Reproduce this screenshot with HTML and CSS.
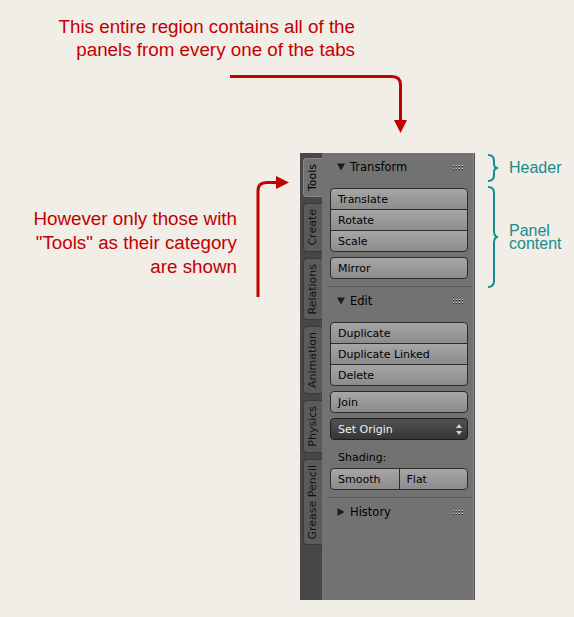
FILE: index.html
```html
<!DOCTYPE html>
<html>
<head>
<meta charset="utf-8">
<link rel="stylesheet" href="styles.css">
</head>
<body>
<div class="page">
  <div class="note note-top">This entire region contains all of the<br>panels from every one of the tabs</div>
  <div class="note note-left">However only those with<br>"Tools" as their category<br>are shown</div>
  <svg class="overlay" width="574" height="617" viewBox="0 0 574 617">
    <g fill="none" stroke="#c30000" stroke-width="3">
      <path d="M230,76.5 H392 Q400.5,76.5 400.5,85 V121"/>
      <path d="M258,297 V191 Q258,182.5 266.5,182.5 H277"/>
    </g>
    <g fill="#c30000">
      <polygon points="394,120 407,120 400.5,133"/>
      <polygon points="276,176 276,189 289,182.5"/>
    </g>
    <g fill="none" stroke="#178c8c" stroke-width="2">
      <path d="M488,155 Q494,155 494,161 V164 Q494,168 498,168 Q494,168 494,172 V175 Q494,181 488,181"/>
      <path d="M488,187 Q494,187 494,193 V231 Q494,237 498,237 Q494,237 494,243 V281 Q494,287 488,287"/>
    </g>
  </svg>
  <div class="label label-header">Header</div>
  <div class="label label-content">Panel<br>content</div>

  <div class="shelf">
    <div class="tabs">
      <div class="tab active"><span>Tools</span></div>
      <div class="tab"><span>Create</span></div>
      <div class="tab"><span>Relations</span></div>
      <div class="tab"><span>Animation</span></div>
      <div class="tab"><span>Physics</span></div>
      <div class="tab"><span>Grease Pencil</span></div>
    </div>
    <div class="region">
      <div class="panel">
        <div class="panel-head">
          <svg class="tri" width="8" height="8" viewBox="0 0 8 8"><polygon points="0,0.5 8,0.5 4,7.5" fill="#1b1b1b"/></svg>
          <span class="title">Transform</span>
          <svg class="grip" width="10" height="5" viewBox="0 0 10 5"><g fill="#d8d8d8"><rect x="0" y="0" width="1" height="1"/><rect x="3" y="0" width="1" height="1"/><rect x="6" y="0" width="1" height="1"/><rect x="9" y="0" width="1" height="1"/><rect x="0" y="3" width="1" height="1"/><rect x="3" y="3" width="1" height="1"/><rect x="6" y="3" width="1" height="1"/><rect x="9" y="3" width="1" height="1"/></g><g fill="#222"><rect x="0" y="1" width="1" height="1"/><rect x="3" y="1" width="1" height="1"/><rect x="6" y="1" width="1" height="1"/><rect x="9" y="1" width="1" height="1"/><rect x="0" y="4" width="1" height="1"/><rect x="3" y="4" width="1" height="1"/><rect x="6" y="4" width="1" height="1"/><rect x="9" y="4" width="1" height="1"/></g></svg>
        </div>
        <div class="panel-body">
          <div class="col">
            <div class="btn">Translate</div>
            <div class="btn">Rotate</div>
            <div class="btn">Scale</div>
          </div>
          <div class="btn single">Mirror</div>
        </div>
      </div>
      <div class="panel">
        <div class="panel-head">
          <svg class="tri" width="8" height="8" viewBox="0 0 8 8"><polygon points="0,0.5 8,0.5 4,7.5" fill="#1b1b1b"/></svg>
          <span class="title">Edit</span>
          <svg class="grip" width="10" height="5" viewBox="0 0 10 5"><g fill="#d8d8d8"><rect x="0" y="0" width="1" height="1"/><rect x="3" y="0" width="1" height="1"/><rect x="6" y="0" width="1" height="1"/><rect x="9" y="0" width="1" height="1"/><rect x="0" y="3" width="1" height="1"/><rect x="3" y="3" width="1" height="1"/><rect x="6" y="3" width="1" height="1"/><rect x="9" y="3" width="1" height="1"/></g><g fill="#222"><rect x="0" y="1" width="1" height="1"/><rect x="3" y="1" width="1" height="1"/><rect x="6" y="1" width="1" height="1"/><rect x="9" y="1" width="1" height="1"/><rect x="0" y="4" width="1" height="1"/><rect x="3" y="4" width="1" height="1"/><rect x="6" y="4" width="1" height="1"/><rect x="9" y="4" width="1" height="1"/></g></svg>
        </div>
        <div class="panel-body">
          <div class="col">
            <div class="btn">Duplicate</div>
            <div class="btn">Duplicate Linked</div>
            <div class="btn">Delete</div>
          </div>
          <div class="btn single">Join</div>
          <div class="btn menu">
            <span>Set Origin</span>
            <svg width="6" height="11" viewBox="0 0 6 11"><polygon points="0,4 6,4 3,0" fill="#d0d0d0"/><polygon points="0,7 6,7 3,11" fill="#d0d0d0"/></svg>
          </div>
          <div class="field-label">Shading:</div>
          <div class="row">
            <div class="btn">Smooth</div>
            <div class="btn">Flat</div>
          </div>
        </div>
      </div>
      <div class="panel">
        <div class="panel-head">
          <svg class="tri" width="8" height="8" viewBox="0 0 8 8"><polygon points="0.5,0 7.5,4 0.5,8" fill="#1b1b1b"/></svg>
          <span class="title">History</span>
          <svg class="grip" width="10" height="5" viewBox="0 0 10 5"><g fill="#d8d8d8"><rect x="0" y="0" width="1" height="1"/><rect x="3" y="0" width="1" height="1"/><rect x="6" y="0" width="1" height="1"/><rect x="9" y="0" width="1" height="1"/><rect x="0" y="3" width="1" height="1"/><rect x="3" y="3" width="1" height="1"/><rect x="6" y="3" width="1" height="1"/><rect x="9" y="3" width="1" height="1"/></g><g fill="#222"><rect x="0" y="1" width="1" height="1"/><rect x="3" y="1" width="1" height="1"/><rect x="6" y="1" width="1" height="1"/><rect x="9" y="1" width="1" height="1"/><rect x="0" y="4" width="1" height="1"/><rect x="3" y="4" width="1" height="1"/><rect x="6" y="4" width="1" height="1"/><rect x="9" y="4" width="1" height="1"/></g></svg>
        </div>
      </div>
    </div>
  </div>
</div>
</body>
</html>
```
FILE: styles.css
```css
html, body {
  margin: 0;
  padding: 0;
  background: #f1eee7;
}

.page {
  position: relative;
  width: 574px;
  height: 617px;
  box-sizing: border-box;
  padding: 153px 0 0 300px;
  background: #f1eee7;
  overflow: hidden;
}

.overlay {
  position: absolute;
  left: 0;
  top: 0;
}

.note {
  position: absolute;
  color: #c30000;
  font-family: "Liberation Sans", Arial, sans-serif;
  font-size: 18.8px;
  text-align: right;
  white-space: nowrap;
}

.note-top {
  right: 219px;
  top: 15px;
  line-height: 23px;
}

.note-left {
  right: 337px;
  top: 207px;
  line-height: 24px;
}

.label {
  position: absolute;
  left: 509px;
  color: #178c8c;
  font-family: "Liberation Sans", Arial, sans-serif;
  font-size: 16px;
}

.label-header {
  top: 159px;
  line-height: 18px;
}

.label-content {
  top: 225px;
  line-height: 12.5px;
}

/* Blender tool shelf */
.shelf {
  display: flex;
  width: 175px;
  height: 447px;
  font-family: "DejaVu Sans", sans-serif;
  font-size: 11px;
  color: #000;
}

.tabs {
  width: 22px;
  flex: none;
  box-sizing: border-box;
  padding: 5px 0 0 3px;
  background: #474747;
  display: flex;
  flex-direction: column;
  gap: 6px;
}

.tab {
  writing-mode: vertical-rl;
  width: 19px;
  line-height: 18px;
  padding: 5px 0;
  box-sizing: border-box;
  background: #5b5b5b;
  border: 1px solid #3a3a3a;
  border-right: none;
  border-radius: 4px 0 0 4px;
  text-align: center;
  color: #111;
}

.tab span {
  display: inline-block;
  transform: rotate(180deg);
}

.tab.active {
  background: #727272;
  border-color: #8a8a8a;
  color: #000;
}

.region {
  width: 151px;
  flex: none;
  background: #727272;
  border-right: 1px solid #8c8c8c;
  box-shadow: 1px 0 0 #505050;
}

.panel {
  margin: 0 1px 0 5px;
}

.panel + .panel {
  border-top: 1px solid #5a5a5a;
}

.panel-head {
  height: 27px;
  display: flex;
  align-items: center;
  padding: 0 9px 0 10px;
}

.tri {
  flex: none;
}

.title {
  margin-left: 5px;
  flex: 1;
  font-size: 11.5px;
}

.grip {
  flex: none;
  margin-top: 1px;
}

.panel-body {
  padding: 8px 4px 7px 3px;
  display: flex;
  flex-direction: column;
  gap: 5px;
}

.col {
  display: flex;
  flex-direction: column;
}

.btn {
  height: 22px;
  box-sizing: border-box;
  display: flex;
  align-items: center;
  padding: 0 0 0 7px;
  border: 1px solid #2c2c2c;
  background: linear-gradient(#a6a6a6, #8c8c8c);
  white-space: nowrap;
}

.col .btn + .btn {
  margin-top: -1px;
}

.col .btn:first-child {
  border-radius: 4px 4px 0 0;
}

.col .btn:last-child {
  border-radius: 0 0 4px 4px;
}

.btn.single {
  border-radius: 4px;
}

.btn.menu {
  border-radius: 4px;
  border-color: #1e1e1e;
  background: linear-gradient(#525252, #363636);
  color: #f0f0f0;
  justify-content: space-between;
  padding-right: 5px;
}

.field-label {
  height: 22px;
  line-height: 24px;
  padding-left: 8px;
  margin-top: 1px;
  margin-bottom: -5px;
}

.row {
  display: flex;
}

.row .btn {
  flex: 1 1 0;
}

.row .btn:first-child {
  border-radius: 4px 0 0 4px;
}

.row .btn + .btn {
  margin-left: -1px;
  border-radius: 0 4px 4px 0;
  padding-left: 7px;
}
```
